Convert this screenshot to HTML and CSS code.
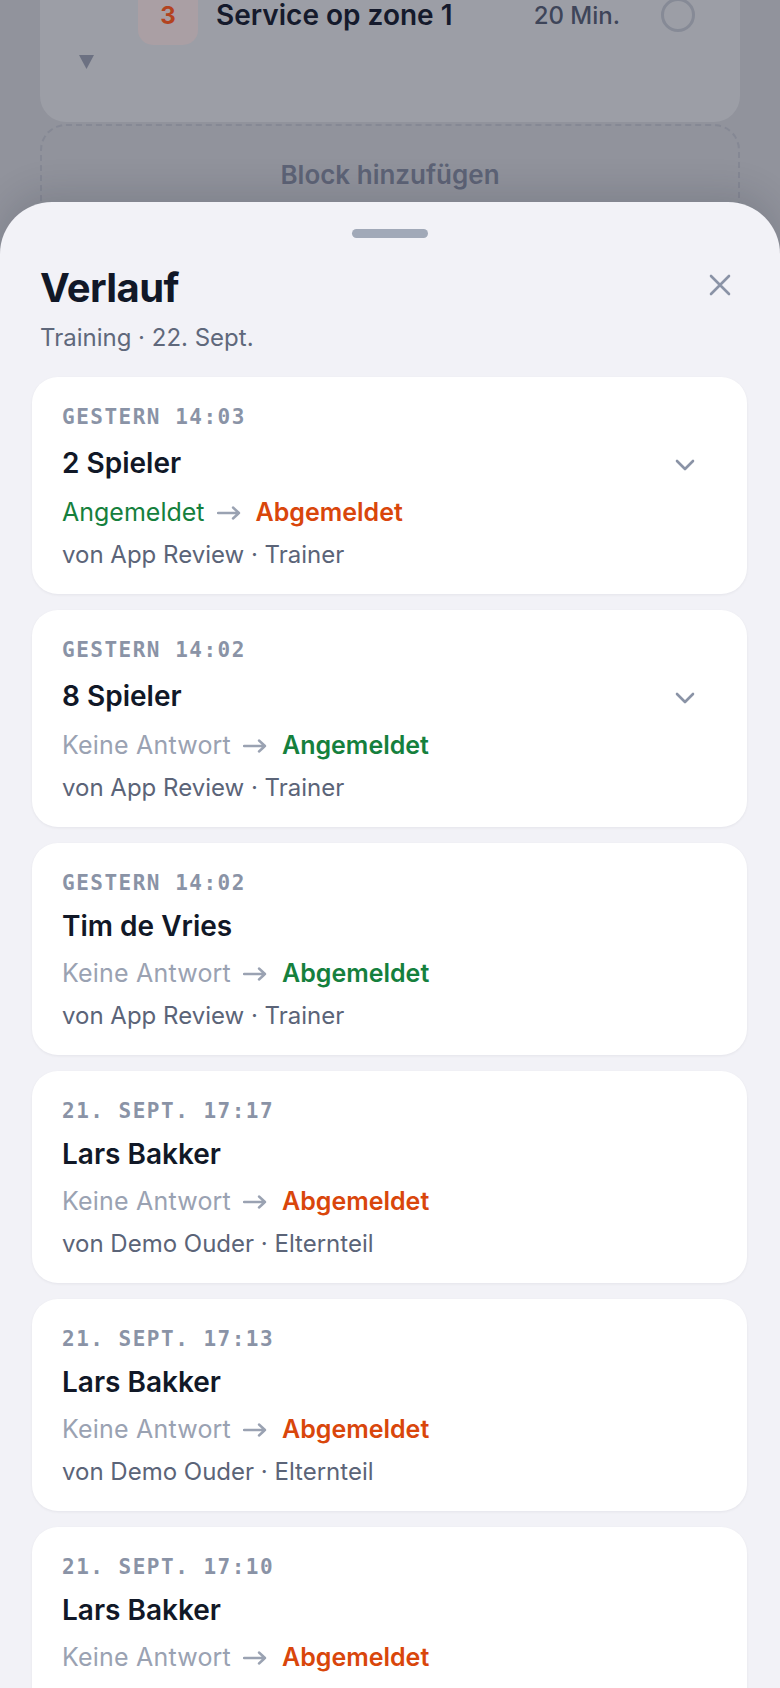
FILE: index.html
```html
<!DOCTYPE html>
<html lang="de">
<head>
    <meta charset="UTF-8" />
    <meta name="viewport" content="width=device-width, initial-scale=1.0"/>
    <title>Verlauf – Training</title>
    <link rel="stylesheet" href="styles.css">
</head>
<body>
    <div class="backdrop">
        <div class="plan-card">
            <div class="plan-row">
                <div class="plan-badge">3</div>
                <div class="plan-title">Service op zone 1</div>
                <div class="plan-duration">20 Min.</div>
                <svg class="plan-check" width="36" height="36" viewBox="0 0 36 36">
                    <circle cx="18" cy="18" r="15.5" fill="none" stroke="#868a96" stroke-width="3"/>
                </svg>
            </div>
            <svg class="plan-toggle" width="15" height="14" viewBox="0 0 15 14">
                <path d="M0 0 H15 L7.5 14 Z" fill="#6c7182"/>
            </svg>
        </div>
        <div class="add-block">Block hinzufügen</div>
    </div>

    <div class="sheet">
        <div class="sheet-handle"></div>
        <div class="sheet-header">
            <h1>Verlauf</h1>
            <button class="close-btn" aria-label="Schließen">
                <svg width="22" height="22" viewBox="0 0 22 22">
                    <path d="M2 2 L20 20 M20 2 L2 20" stroke="#8a93a6" stroke-width="2.6" stroke-linecap="round"/>
                </svg>
            </button>
        </div>
        <div class="sheet-sub">Training · 22. Sept.</div>

        <div class="log-list">
            <div class="log-card">
                <div class="log-time">GESTERN 14:03</div>
                <div class="log-head">
                    <div class="log-name">2 Spieler</div>
                    <span class="chevron">
                        <svg width="20" height="12" viewBox="0 0 20 12">
                            <path d="M2 2 L10 10 L18 2" fill="none" stroke="#8a93a6" stroke-width="2.6" stroke-linecap="round" stroke-linejoin="round"/>
                        </svg>
                    </span>
                </div>
                <div class="log-status">
                    <span class="st-in">Angemeldet</span>
                    <svg class="arrow" width="24" height="14" viewBox="0 0 24 14"><path d="M1 7 H22 M16 1.5 L22 7 L16 12.5" fill="none" stroke="#9aa2b2" stroke-width="2.4" stroke-linecap="round" stroke-linejoin="round"/></svg>
                    <span class="st-out strong">Abgemeldet</span>
                </div>
                <div class="log-by">von App Review · Trainer</div>
            </div>

            <div class="log-card">
                <div class="log-time">GESTERN 14:02</div>
                <div class="log-head">
                    <div class="log-name">8 Spieler</div>
                    <span class="chevron">
                        <svg width="20" height="12" viewBox="0 0 20 12">
                            <path d="M2 2 L10 10 L18 2" fill="none" stroke="#8a93a6" stroke-width="2.6" stroke-linecap="round" stroke-linejoin="round"/>
                        </svg>
                    </span>
                </div>
                <div class="log-status">
                    <span class="st-none">Keine Antwort</span>
                    <svg class="arrow" width="24" height="14" viewBox="0 0 24 14"><path d="M1 7 H22 M16 1.5 L22 7 L16 12.5" fill="none" stroke="#9aa2b2" stroke-width="2.4" stroke-linecap="round" stroke-linejoin="round"/></svg>
                    <span class="st-in strong">Angemeldet</span>
                </div>
                <div class="log-by">von App Review · Trainer</div>
            </div>

            <div class="log-card">
                <div class="log-time">GESTERN 14:02</div>
                <div class="log-head">
                    <div class="log-name">Tim de Vries</div>
                </div>
                <div class="log-status">
                    <span class="st-none">Keine Antwort</span>
                    <svg class="arrow" width="24" height="14" viewBox="0 0 24 14"><path d="M1 7 H22 M16 1.5 L22 7 L16 12.5" fill="none" stroke="#9aa2b2" stroke-width="2.4" stroke-linecap="round" stroke-linejoin="round"/></svg>
                    <span class="st-in strong">Abgemeldet</span>
                </div>
                <div class="log-by">von App Review · Trainer</div>
            </div>

            <div class="log-card">
                <div class="log-time">21. SEPT. 17:17</div>
                <div class="log-head">
                    <div class="log-name">Lars Bakker</div>
                </div>
                <div class="log-status">
                    <span class="st-none">Keine Antwort</span>
                    <svg class="arrow" width="24" height="14" viewBox="0 0 24 14"><path d="M1 7 H22 M16 1.5 L22 7 L16 12.5" fill="none" stroke="#9aa2b2" stroke-width="2.4" stroke-linecap="round" stroke-linejoin="round"/></svg>
                    <span class="st-out strong">Abgemeldet</span>
                </div>
                <div class="log-by">von Demo Ouder · Elternteil</div>
            </div>

            <div class="log-card">
                <div class="log-time">21. SEPT. 17:13</div>
                <div class="log-head">
                    <div class="log-name">Lars Bakker</div>
                </div>
                <div class="log-status">
                    <span class="st-none">Keine Antwort</span>
                    <svg class="arrow" width="24" height="14" viewBox="0 0 24 14"><path d="M1 7 H22 M16 1.5 L22 7 L16 12.5" fill="none" stroke="#9aa2b2" stroke-width="2.4" stroke-linecap="round" stroke-linejoin="round"/></svg>
                    <span class="st-out strong">Abgemeldet</span>
                </div>
                <div class="log-by">von Demo Ouder · Elternteil</div>
            </div>

            <div class="log-card">
                <div class="log-time">21. SEPT. 17:10</div>
                <div class="log-head">
                    <div class="log-name">Lars Bakker</div>
                </div>
                <div class="log-status">
                    <span class="st-none">Keine Antwort</span>
                    <svg class="arrow" width="24" height="14" viewBox="0 0 24 14"><path d="M1 7 H22 M16 1.5 L22 7 L16 12.5" fill="none" stroke="#9aa2b2" stroke-width="2.4" stroke-linecap="round" stroke-linejoin="round"/></svg>
                    <span class="st-out strong">Abgemeldet</span>
                </div>
                <div class="log-by">von Demo Ouder · Elternteil</div>
            </div>
        </div>
    </div>
</body>
</html>
```

FILE: styles.css
```css
body {
    margin: 0;
    height: 1688px;
    overflow: hidden;
    font-family: 'Inter', 'Noto Sans', sans-serif;
    background-color: #91939c;
    color: #111827;
}

/* dimmed page behind the sheet */
.backdrop {
    height: 240px;
    padding: 0 40px;
    overflow: hidden;
}
.plan-card {
    margin-top: -40px;
    height: 162px;
    box-sizing: border-box;
    padding-top: 25px;
    background: #9c9ea6;
    border-radius: 26px;
}
.plan-row {
    display: flex;
    align-items: center;
    padding: 0 44px 0 98px;
}
.plan-badge {
    width: 60px;
    height: 60px;
    border-radius: 15px;
    background: #aa9fa4;
    color: #b3431f;
    font-weight: 700;
    font-size: 24px;
    display: flex;
    align-items: center;
    justify-content: center;
}
.plan-title {
    margin-left: 18px;
    font-size: 28px;
    font-weight: 600;
    color: #151a2c;
    flex: 1;
}
.plan-duration {
    font-size: 24px;
    font-weight: 500;
    color: #3e4559;
    margin-right: 40px;
}
.plan-toggle {
    display: block;
    margin: 10px 0 0 39px;
}
.add-block {
    margin-top: 2px;
    height: 120px;
    box-sizing: border-box;
    padding-top: 33px;
    border: 2px dashed #858894;
    border-radius: 26px;
    text-align: center;
    font-size: 26px;
    font-weight: 600;
    color: #5d6376;
}

/* bottom sheet */
.sheet {
    position: relative;
    margin-top: -38px;
    height: 1500px;
    background: #f2f2f7;
    border-radius: 52px 52px 0 0;
    box-shadow: 0 -12px 34px rgba(30, 32, 48, 0.14);
    padding-top: 27px;
}
.sheet-handle {
    width: 76px;
    height: 9px;
    border-radius: 5px;
    background: #a1a9b8;
    margin: 0 auto;
}
.sheet-header {
    display: flex;
    align-items: center;
    justify-content: space-between;
    padding: 0 38px 0 40px;
    margin-top: 25px;
}
.sheet-header h1 {
    margin: 0;
    font-size: 40px;
    line-height: 48px;
    font-weight: 700;
    letter-spacing: -0.6px;
    color: #111827;
}
.close-btn {
    width: 44px;
    height: 44px;
    margin-bottom: 6px;
    background: none;
    border: none;
    padding: 0;
    display: flex;
    align-items: center;
    justify-content: center;
}
.sheet-sub {
    margin-top: 10px;
    padding: 0 40px;
    font-size: 24px;
    line-height: 30px;
    color: #5f687b;
}

.log-list {
    margin-top: 24px;
    padding: 0 33px 0 32px;
    display: flex;
    flex-direction: column;
    gap: 16px;
}
.log-card {
    background: #fff;
    border-radius: 26px;
    padding: 27px 30px 25px;
    box-shadow: 0 1px 3px rgba(20, 24, 40, 0.06);
}
.log-time {
    font-family: 'DejaVu Sans Mono', monospace;
    font-weight: 700;
    font-size: 21px;
    line-height: 26px;
    letter-spacing: 1.5px;
    color: #8a93a6;
}
.log-head {
    margin-top: 13px;
    display: flex;
    align-items: center;
    justify-content: space-between;
}
.log-name {
    font-size: 28px;
    line-height: 34px;
    font-weight: 600;
    color: #111827;
}
.chevron {
    width: 40px;
    height: 39px;
    margin-right: 12px;
    display: flex;
    align-items: center;
    justify-content: center;
}
.chevron svg {
    margin-top: 5px;
}
.log-status {
    margin-top: 15px;
    display: flex;
    align-items: center;
    font-size: 25px;
    line-height: 31px;
}
.log-status .arrow {
    margin: 0 15px 0 12px;
}
.st-none {
    color: #9aa2b2;
    letter-spacing: 0.2px;
}
.st-in {
    color: #15803d;
}
.st-out {
    color: #d9460b;
}
.strong {
    font-weight: 600;
}
.log-by {
    margin-top: 13px;
    font-size: 24px;
    line-height: 28px;
    color: #5b6478;
}
```
